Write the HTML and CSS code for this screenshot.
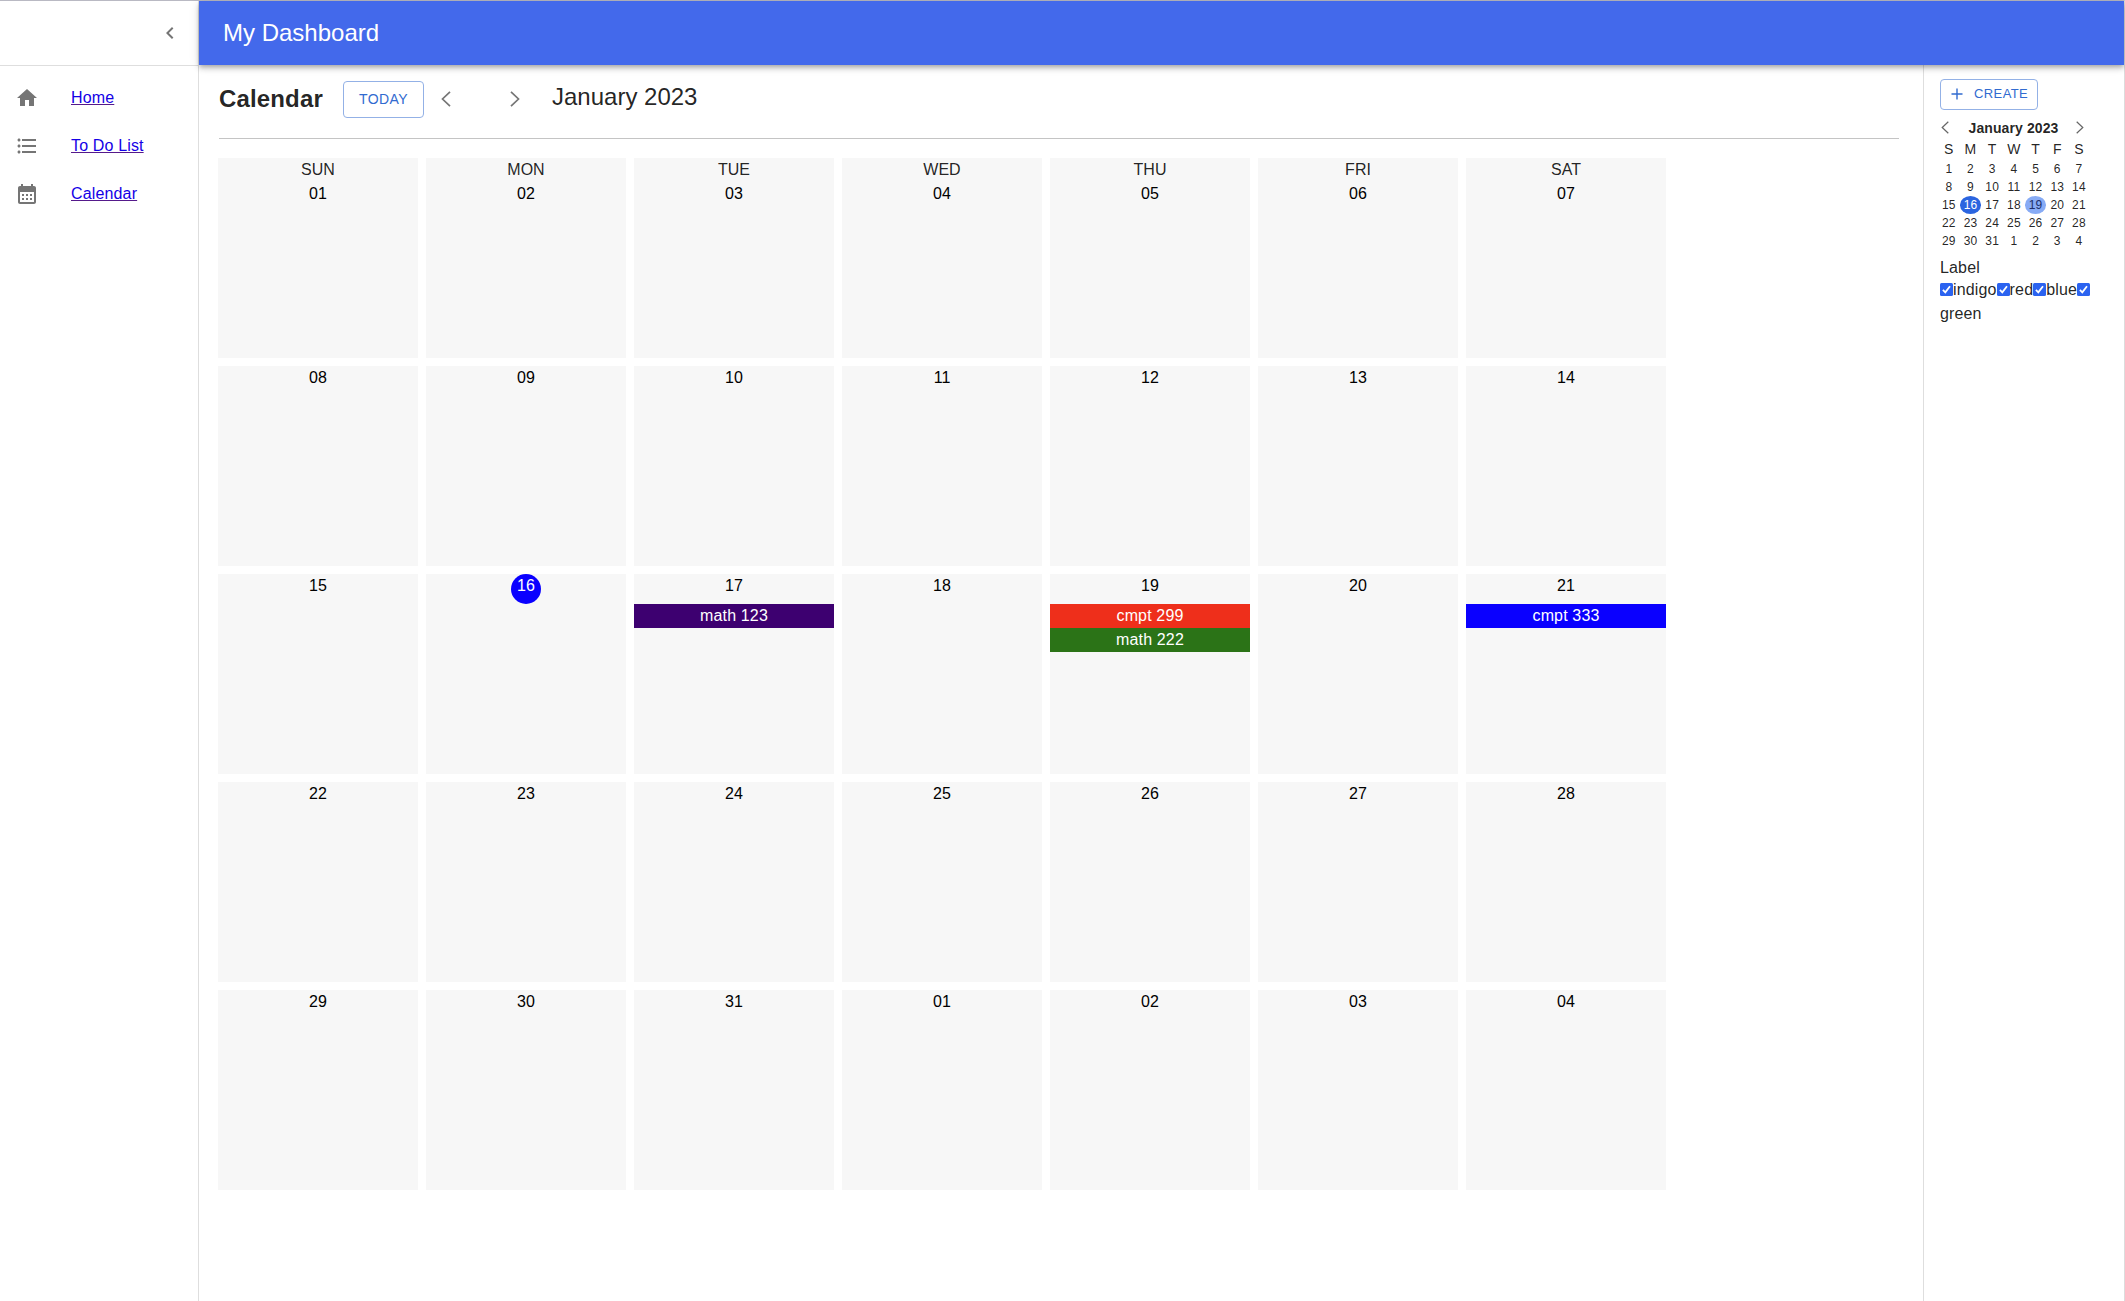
FILE: index.html
```html
<!DOCTYPE html>
<html lang="en">
<head>
<meta charset="utf-8">
<title>My Dashboard</title>
<link rel="stylesheet" href="styles.css">
</head>
<body>
<div class="app">
  <nav class="sidebar">
    <div class="sidebar-head">
      <svg class="icon" viewBox="0 0 24 24"><path d="M15.41 7.41 14 6l-6 6 6 6 1.41-1.41L10.83 12z"/></svg>
    </div>
    <ul class="menu">
      <li><svg class="icon" viewBox="0 0 24 24"><path d="M10 20v-6h4v6h5v-8h3L12 3 2 12h3v8z"/></svg><a href="#">Home</a></li>
      <li><svg class="icon" viewBox="0 0 24 24"><path d="M4 10.5c-.83 0-1.5.67-1.5 1.5s.67 1.5 1.5 1.5 1.5-.67 1.5-1.5-.67-1.5-1.5-1.5m0-6c-.83 0-1.5.67-1.5 1.5S3.170 7.500 4 7.500 5.500 6.830 5.500 6 4.830 4.500 4 4.500m0 12c-.83 0-1.500.68-1.500 1.500s.68 1.500 1.500 1.500 1.500-.68 1.500-1.500-.67-1.500-1.500-1.500M7 19h14v-2H7zm0-6h14v-2H7zm0-8v2h14V5z"/></svg><a href="#">To Do List</a></li>
      <li><svg class="icon" viewBox="0 0 24 24"><path d="M19 4h-1V2h-2v2H8V2H6v2H5c-1.110 0-1.990.9-1.990 2L3 20c0 1.100.89 2 2 2h14c1.100 0 2-.9 2-2V6c0-1.100-.9-2-2-2m0 16H5V10h14zM9 14H7v-2h2zm4 0h-2v-2h2zm4 0h-2v-2h2zm-8 4H7v-2h2zm4 0h-2v-2h2zm4 0h-2v-2h2z"/></svg><a href="#">Calendar</a></li>
    </ul>
  </nav>
  <div class="page">
    <header class="appbar">My Dashboard</header>
    <div class="content">
      <main class="main">
        <div class="toolbar">
          <h1>Calendar</h1>
          <button class="btn today">TODAY</button>
          <svg class="arrow prev" viewBox="0 0 10 16"><path d="M9 .8 1.500 8 9 15.200"/></svg>
          <svg class="arrow next" viewBox="0 0 10 16"><path d="M1 .8 8.500 8 1 15.200"/></svg>
          <h2>January 2023</h2>
        </div>
        <div class="month">
          <div class="day"><p class="dow">SUN</p><p>01</p></div>
          <div class="day"><p class="dow">MON</p><p>02</p></div>
          <div class="day"><p class="dow">TUE</p><p>03</p></div>
          <div class="day"><p class="dow">WED</p><p>04</p></div>
          <div class="day"><p class="dow">THU</p><p>05</p></div>
          <div class="day"><p class="dow">FRI</p><p>06</p></div>
          <div class="day"><p class="dow">SAT</p><p>07</p></div>
          <div class="day"><p>08</p></div>
          <div class="day"><p>09</p></div>
          <div class="day"><p>10</p></div>
          <div class="day"><p>11</p></div>
          <div class="day"><p>12</p></div>
          <div class="day"><p>13</p></div>
          <div class="day"><p>14</p></div>
          <div class="day"><p>15</p></div>
          <div class="day"><p class="current">16</p></div>
          <div class="day"><p class="busy">17</p><div class="event indigo">math 123</div></div>
          <div class="day"><p>18</p></div>
          <div class="day"><p class="busy">19</p><div class="event red">cmpt 299</div><div class="event green">math 222</div></div>
          <div class="day"><p>20</p></div>
          <div class="day"><p class="busy">21</p><div class="event blue">cmpt 333</div></div>
          <div class="day"><p>22</p></div>
          <div class="day"><p>23</p></div>
          <div class="day"><p>24</p></div>
          <div class="day"><p>25</p></div>
          <div class="day"><p>26</p></div>
          <div class="day"><p>27</p></div>
          <div class="day"><p>28</p></div>
          <div class="day"><p>29</p></div>
          <div class="day"><p>30</p></div>
          <div class="day"><p>31</p></div>
          <div class="day"><p>01</p></div>
          <div class="day"><p>02</p></div>
          <div class="day"><p>03</p></div>
          <div class="day"><p>04</p></div>
        </div>
      </main>
      <aside class="side">
        <button class="btn create"><svg viewBox="0 0 12 12"><path d="M6 .5v11M.5 6h11"/></svg><span>CREATE</span></button>
        <div class="mini-head">
          <svg viewBox="0 0 8 13"><path d="M7.300.7 1.200 6.500l6.100 5.800"/></svg>
          <b>January 2023</b>
          <svg viewBox="0 0 8 13"><path d="M.7.700l6.100 5.800-6.100 5.800"/></svg>
        </div>
        <div class="mini">
          <span class="wd">S</span><span class="wd">M</span><span class="wd">T</span><span class="wd">W</span><span class="wd">T</span><span class="wd">F</span><span class="wd">S</span>
          <span>1</span><span>2</span><span>3</span><span>4</span><span>5</span><span>6</span><span>7</span>
          <span>8</span><span>9</span><span>10</span><span>11</span><span>12</span><span>13</span><span>14</span>
          <span>15</span><span class="now">16</span><span>17</span><span>18</span><span class="picked">19</span><span>20</span><span>21</span>
          <span>22</span><span>23</span><span>24</span><span>25</span><span>26</span><span>27</span><span>28</span>
          <span>29</span><span>30</span><span>31</span><span>1</span><span>2</span><span>3</span><span>4</span>
        </div>
        <div class="label-title">Label</div>
        <div class="labels">
          <span><svg class="check" viewBox="0 0 13 13"><rect width="13" height="13" rx="1.500"/><path d="M2.900 6.900 5.300 9.400 10 3.200"/></svg>indigo</span>
          <span><svg class="check" viewBox="0 0 13 13"><rect width="13" height="13" rx="1.500"/><path d="M2.900 6.900 5.300 9.400 10 3.200"/></svg>red</span>
          <span><svg class="check" viewBox="0 0 13 13"><rect width="13" height="13" rx="1.500"/><path d="M2.900 6.900 5.300 9.400 10 3.200"/></svg>blue</span>
          <span><svg class="check" viewBox="0 0 13 13"><rect width="13" height="13" rx="1.500"/><path d="M2.900 6.900 5.300 9.400 10 3.200"/></svg></span>
          <span>green</span>
        </div>
      </aside>
    </div>
  </div>
</div>
</body>
</html>
```
FILE: styles.css
```css
* { box-sizing: border-box; }
body {
  margin: 0;
  font: 16px/24px "Liberation Sans", Arial, sans-serif;
  color: rgba(0, 0, 0, .87);
  background: #fff;
}
h1, h2, p, ul { margin: 0; padding: 0; }
.app {
  display: flex;
  height: 1301px;
  border-top: 1px solid #b9b9c3;
  border-right: 1px solid #dcdcdc;
}
.icon { width: 24px; height: 24px; fill: #757575; flex: none; }

.sidebar { width: 199px; flex: none; border-right: 1px solid #dedede; }
.sidebar-head {
  height: 65px;
  display: flex;
  align-items: center;
  justify-content: flex-end;
  padding-right: 16px;
  border-bottom: 1px solid #dedede;
}
.menu { list-style: none; padding: 8px 0 0 15px; }
.menu li { height: 48px; display: flex; align-items: center; gap: 32px; }
.menu a {
  color: #1400e6;
  letter-spacing: .15px;
  text-decoration: underline #551a8b;
  text-decoration-thickness: 1px;
}

.page { flex: 1; display: flex; flex-direction: column; }
.appbar {
  height: 64px;
  flex: none;
  padding-left: 24px;
  background: #4369eb;
  color: #fff;
  font-size: 24px;
  line-height: 63px;
  box-shadow: 0 2px 4px -1px rgba(0, 0, 0, .2), 0 4px 5px rgba(0, 0, 0, .14), 0 1px 10px rgba(0, 0, 0, .12);
  z-index: 1;
}
.content { flex: 1; display: flex; }
.main { flex: 1; padding: 16px 24px 0 19px; }
.toolbar {
  height: 58px;
  margin-left: 1px;
  display: flex;
  align-items: flex-start;
  border-bottom: 1px solid #c4c4c4;
}
h1 { font-size: 24px; line-height: 36px; width: 124px; letter-spacing: .15px; }
h2 { font-size: 24px; line-height: 32px; font-weight: 400; }
.btn {
  font: 14px "Liberation Sans", Arial, sans-serif;
  letter-spacing: .4px;
  color: #316bd0;
  background: none;
  border: 1px solid #93b1e6;
  border-radius: 4px;
  padding: 0;
}
.today { width: 81px; height: 37px; padding-bottom: 2px; }
.arrow { width: 10px; height: 16px; margin-top: 10px; fill: none; stroke: #757575; stroke-width: 1.7; }
.prev { margin-left: 17px; }
.next { margin-left: 59px; margin-right: 32px; }

.month {
  display: grid;
  grid-template-columns: repeat(7, 200px);
  grid-auto-rows: 200px;
  gap: 8px;
  margin-top: 19px;
}
.day { background: #f7f7f7; text-align: center; color: #000; }
.dow { color: rgba(0, 0, 0, .87); }
.busy { height: 30px; }
.current {
  width: 30px;
  height: 30px;
  margin: 0 auto;
  border-radius: 50%;
  background: #0a00ff;
  color: #fff;
}
.event { color: #fff; letter-spacing: .15px; }
.indigo { background: #3d0070; }
.red { background: #ee2f1b; }
.green { background: #2b7317; }
.blue { background: #0a00ff; }

.side { width: 201px; flex: none; border-left: 1px solid #dedede; padding: 14px 30px 0 16px; }
.create { display: flex; align-items: center; gap: 11px; width: 98px; height: 31px; padding: 0 0 1px 10px; font-size: 13px; }
.create span { padding-bottom: 1px; }
.create svg { width: 12px; height: 12px; fill: none; stroke: #316bd0; stroke-width: 1.4; }
.mini-head {
  display: flex;
  align-items: center;
  justify-content: space-between;
  width: 143px;
  height: 20px;
  margin: 7px 0 0 1px;
  font-size: 14px;
  letter-spacing: .1px;
}
.mini-head b { padding: 2px 0 0 2px; }
.mini-head svg { width: 8px; height: 13px; fill: none; stroke: #666; stroke-width: 1.2; }
.mini {
  display: grid;
  grid-template-columns: repeat(7, 21.7px);
  grid-template-rows: 23px;
  grid-auto-rows: 18px;
  margin-left: -2px;
  text-align: center;
  font-size: 12px;
  line-height: 18px;
  letter-spacing: .2px;
}
.mini .wd { font-size: 14px; line-height: 24px; }
.now, .picked { border-radius: 50%; }
.now { background: #2b65e0; color: #fff; }
.picked { background: #87abf5; color: #20306a; }
.label-title { margin-top: 6px; letter-spacing: .15px; }
.labels { display: flex; flex-wrap: wrap; width: 152px; line-height: 24px; letter-spacing: .15px; margin-top: -2px; }
.labels span { display: flex; align-items: center; height: 24px; }
.check { width: 13px; height: 13px; margin-top: -2px; fill: #2b63f0; }
.check path { fill: none; stroke: #fff; stroke-width: 1.8; }
```
